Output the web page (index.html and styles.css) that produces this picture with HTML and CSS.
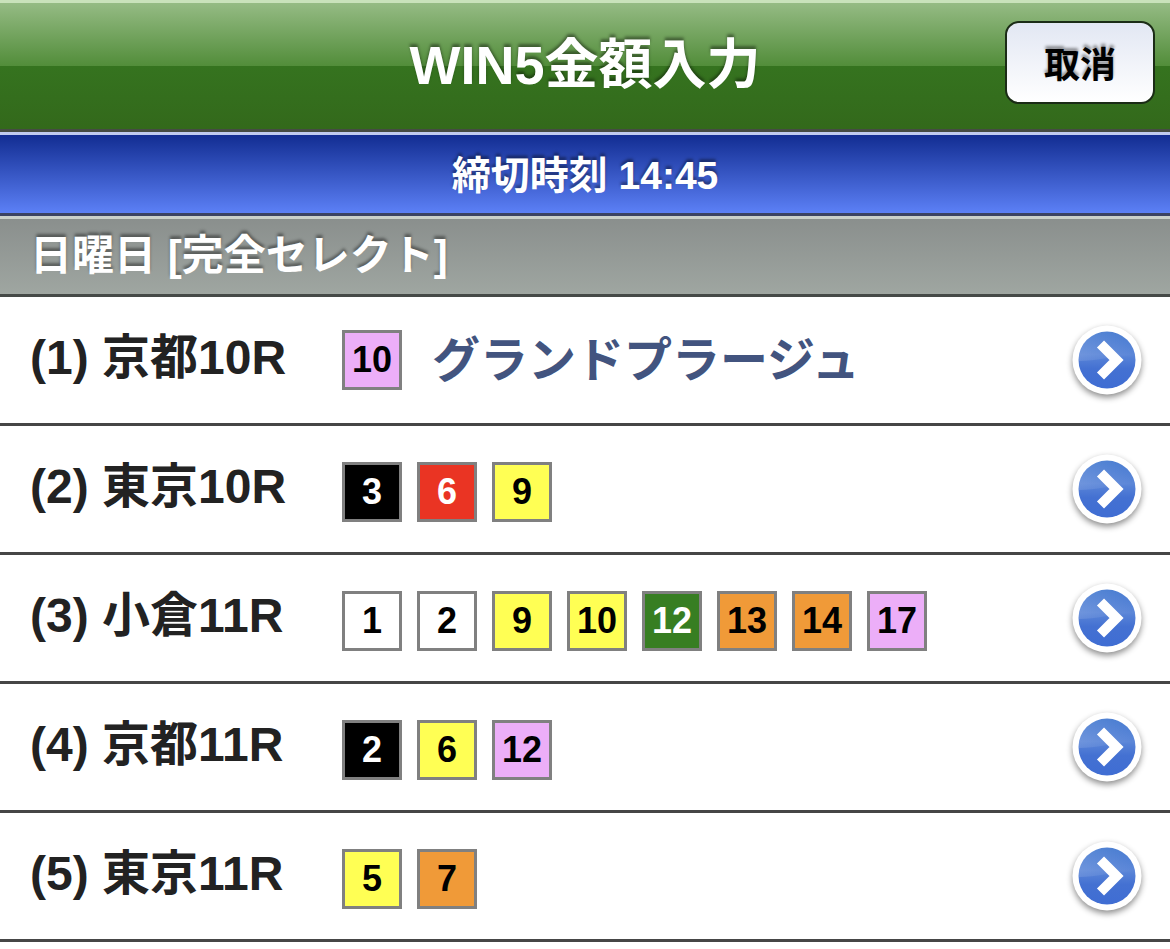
FILE: index.html
```html
<!DOCTYPE html>
<html lang="ja">
<head>
<meta charset="utf-8">
<meta name="viewport" content="width=device-width">
<title>WIN5金額入力</title>
<link rel="stylesheet" href="styles.css">
</head>
<body>
<svg class="defs" aria-hidden="true">
  <defs>
    <linearGradient id="disc" x1="0" y1="0" x2="0" y2="1">
      <stop offset="0" stop-color="#4479d0"/>
      <stop offset="0.4" stop-color="#5b86d8"/>
      <stop offset="0.65" stop-color="#4471d2"/>
      <stop offset="1" stop-color="#3f6dd3"/>
    </linearGradient>
    <linearGradient id="gloss" x1="0" y1="0" x2="1" y2="0">
      <stop offset="0" stop-color="#fff" stop-opacity="0.12"/>
      <stop offset="1" stop-color="#fff" stop-opacity="0"/>
    </linearGradient>
    <symbol id="go" viewBox="0 0 72 72">
      <circle cx="36" cy="36" r="34.5" fill="#fff"/>
      <circle cx="36" cy="36" r="28.5" fill="url(#disc)"/>
      <path d="M7.5 37A28.5 28.5 0 0 1 64.400 33Q52 31 36 34T7.5 37Z" fill="url(#gloss)"/>
      <path d="M29.500 20L45.500 36L29.500 52" fill="none" stroke="#fff" stroke-width="10"/>
    </symbol>
  </defs>
</svg>
<header class="header">
  <h1 class="title">WIN5金額入力</h1>
  <button class="cancel" type="button">取消</button>
</header>
<p class="deadline">締切時刻 14:45</p>
<main>
  <h2 class="section">日曜日 [完全セレクト]</h2>
  <ul class="races">
    <li><a class="race race-named" href="#race1">
      <span class="label">(1) 京都10R</span>
      <span class="picks"><span class="num pink">10</span><span class="horse">グランドプラージュ</span></span>
      <svg class="go" aria-hidden="true"><use href="#go"/></svg>
    </a></li>
    <li><a class="race" href="#race2">
      <span class="label">(2) 東京10R</span>
      <span class="picks"><span class="num black">3</span><span class="num red">6</span><span class="num yellow">9</span></span>
      <svg class="go" aria-hidden="true"><use href="#go"/></svg>
    </a></li>
    <li><a class="race" href="#race3">
      <span class="label">(3) 小倉11R</span>
      <span class="picks"><span class="num">1</span><span class="num">2</span><span class="num yellow">9</span><span class="num yellow">10</span><span class="num green">12</span><span class="num orange">13</span><span class="num orange">14</span><span class="num pink">17</span></span>
      <svg class="go" aria-hidden="true"><use href="#go"/></svg>
    </a></li>
    <li><a class="race" href="#race4">
      <span class="label">(4) 京都11R</span>
      <span class="picks"><span class="num black">2</span><span class="num yellow">6</span><span class="num pink">12</span></span>
      <svg class="go" aria-hidden="true"><use href="#go"/></svg>
    </a></li>
    <li><a class="race" href="#race5">
      <span class="label">(5) 東京11R</span>
      <span class="picks"><span class="num yellow">5</span><span class="num orange">7</span></span>
      <svg class="go" aria-hidden="true"><use href="#go"/></svg>
    </a></li>
  </ul>
</main>
</body>
</html>
```
FILE: styles.css
```css
* {
  box-sizing: border-box;
}

body {
  margin: 0;
  background: #fff;
  color: #222;
  font-family: "Liberation Sans", "Noto Sans CJK JP", sans-serif;
  font-weight: 700;
}

.defs {
  position: absolute;
  width: 0;
  height: 0;
}

.header {
  display: grid;
  grid-template-columns: 1fr auto 1fr;
  align-items: start;
  padding: 18px 15px 20px;
  border-top: 3px solid #c9e2bb;
  border-bottom: 3px solid #454b43;
  background: linear-gradient(#95bb84, #528d3a 50%, #35731f 50%, #33691b);
}

.title {
  grid-column: 2;
  margin: 0;
  color: #fff;
  font-size: 54px;
  line-height: 88px;
  text-shadow: 0 -3px 3px rgba(0, 0, 0, 0.4);
}

.cancel {
  justify-self: end;
  width: 150px;
  height: 83px;
  padding: 0 0 2px;
  border: 2px solid #1b2c16;
  border-radius: 14px;
  background: linear-gradient(#e2e7f3, #fff);
  color: #000;
  font: inherit;
  font-size: 36px;
  text-shadow: 0 -3px 3px rgba(0, 0, 0, 0.4);
}

.deadline {
  margin: 0;
  padding: 11px 15px 7px;
  border-top: 3px solid #c0cbf0;
  border-bottom: 3px solid #3b4262;
  background: linear-gradient(#122d92, #5c80f6);
  color: #fff;
  font-size: 39px;
  line-height: 60px;
  text-align: center;
  text-shadow: 0 -3px 3px rgba(0, 0, 0, 0.4);
}

.section {
  margin: 0;
  padding: 7px 30px 8px;
  border-top: 3px solid #cbd0cb;
  border-bottom: 3px solid #454947;
  background: linear-gradient(#8a8f8d, #9fa6a1);
  color: #fff;
  font-size: 42px;
  line-height: 60px;
  text-shadow: 0 -3px 3px rgba(0, 0, 0, 0.4);
}

.races {
  margin: 0;
  padding: 0;
  list-style: none;
}

.race {
  display: flex;
  align-items: flex-start;
  min-height: 129px;
  padding: 27px 27px 0 30px;
  border-bottom: 3px solid #464646;
  color: inherit;
  text-decoration: none;
}

.label {
  flex: 0 0 312px;
  font-size: 48px;
  line-height: 68px;
}

.picks {
  display: flex;
  flex: 1;
  flex-wrap: wrap;
  gap: 15px;
  padding: 9px 0;
}

.race-named .picks {
  padding-top: 6px;
}

.num {
  width: 60px;
  height: 60px;
  border: 3px solid #808080;
  background: #fff;
  color: #000;
  font-size: 36px;
  line-height: 54px;
  text-align: center;
}

.black {
  background: #000;
  color: #fff;
}

.red {
  background: #ea3423;
  color: #fff;
}

.yellow {
  background: #ffff54;
}

.green {
  background: #377e22;
  color: #fff;
}

.orange {
  background: #f09a38;
}

.pink {
  background: #ecaef8;
}

.horse {
  padding-left: 15px;
  color: #42547f;
  font-size: 48px;
  line-height: 62px;
}

.go {
  flex: none;
  width: 72px;
  height: 72px;
  filter: drop-shadow(0 3px 3px rgba(0, 0, 0, 0.45));
}
```
